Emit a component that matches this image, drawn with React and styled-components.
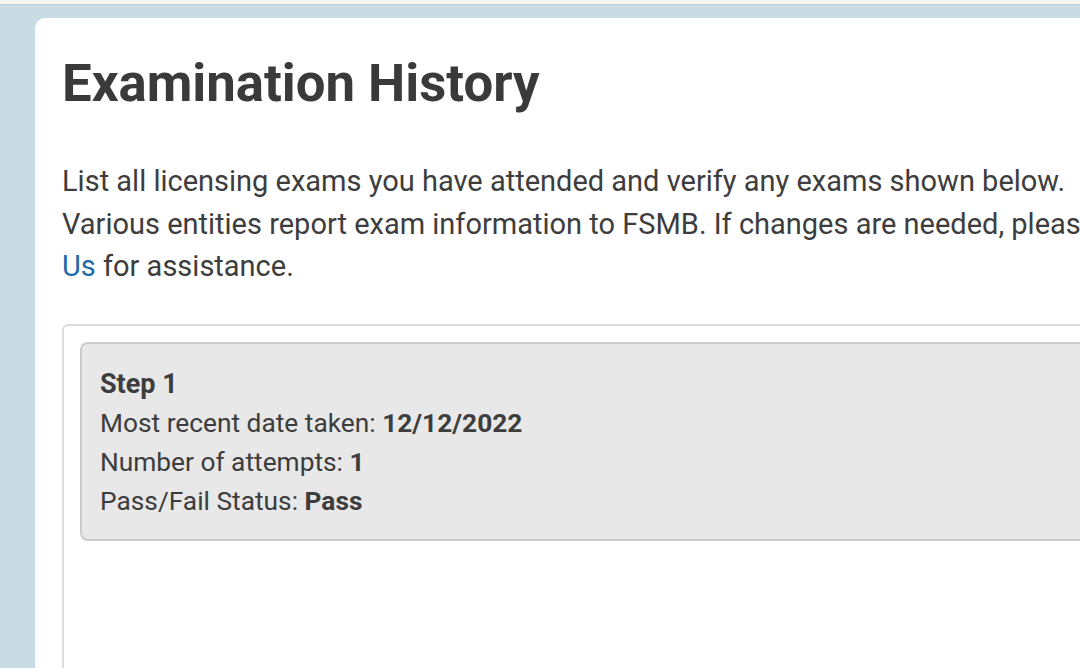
import React from "react";
import styled, { createGlobalStyle } from "styled-components";

const GlobalStyle = createGlobalStyle`
  html, body {
    margin: 0;
    padding: 0;
    background: #c9dbe3;
    overflow: hidden;
  }
  body {
    font-family: Roboto, "Liberation Sans", sans-serif;
    color: #3a3a3a;
  }
`;

export const TopStrip = styled.div`
  height: 4px;
  background: #f8f6ee;
  border-bottom: 1px solid #bccfd7;
`;

export const Page = styled.main`
  padding: 13px 0 0 35px;
`;

export const Card = styled.section`
  width: 1300px;
  min-height: 720px;
  background: #ffffff;
  border-radius: 10px 0 0 0;
  padding: 34px 27px 0;
  box-sizing: border-box;
`;

export const Title = styled.h1`
  margin: 0;
  font-size: 52.7px;
  font-weight: 700;
  line-height: normal;
  color: #3a3a3a;
`;

export const Intro = styled.p`
  margin: 46px 0 0;
  font-size: 29px;
  line-height: 42.5px;
  width: 1180px;
  color: #3d3d3d;
`;

export const Link = styled.a`
  color: #1f6aa5;
  text-decoration: none;
`;

export const Panel = styled.div`
  margin-top: 36px;
  border: 2px solid #dcdcdc;
  border-right: none;
  border-radius: 6px 0 0 0;
  padding: 16px 0 0 16px;
  min-height: 400px;
`;

export const ExamBox = styled.div`
  background: #e8e8e8;
  border: 2px solid #cbcbcb;
  border-right: none;
  border-radius: 8px 0 0 8px;
  padding: 21px 18px 18px;
  font-size: 26.3px;
  line-height: 39px;
  color: #3d3d3d;
`;

export const StepName = styled.div`
  font-size: 27px;
  font-weight: 700;
`;

export const Row = styled.div``;

export const Value = styled.strong`
  font-weight: 700;
`;

const exam = {
  name: "Step 1",
  date: "12/12/2022",
  attempts: "1",
  status: "Pass",
};

export default function App() {
  return (
    <>
      <GlobalStyle />
      <TopStrip />
      <Page>
        <Card>
          <Title>Examination History</Title>
          <Intro>
            List all licensing exams you have attended and verify any exams shown below.
            <br />
            Various entities report exam information to FSMB. If changes are needed, please{" "}
            <Link href="#">Contact Us</Link> for assistance.
          </Intro>
          <Panel>
            <ExamBox>
              <StepName>{exam.name}</StepName>
              <Row>
                Most recent date taken: <Value>{exam.date}</Value>
              </Row>
              <Row>
                Number of attempts: <Value>{exam.attempts}</Value>
              </Row>
              <Row>
                Pass/Fail Status: <Value>{exam.status}</Value>
              </Row>
            </ExamBox>
          </Panel>
        </Card>
      </Page>
    </>
  );
}
